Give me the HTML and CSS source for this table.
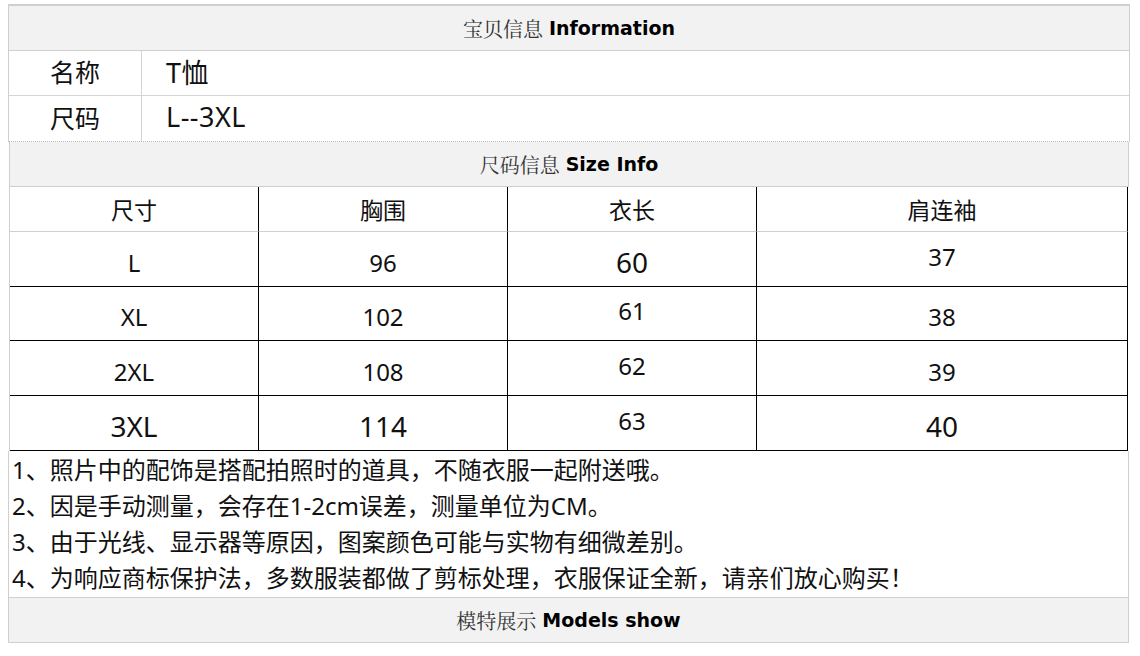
FILE: index.html
```html
<!DOCTYPE html>
<html lang="zh-CN">
<head>
<meta charset="utf-8">
<title>宝贝信息</title>
<link rel="stylesheet" href="styles.css">
</head>
<body>
<div class="page">
  <div class="info-box">
    <div class="sec-head first">宝贝信息 <b>Information</b></div>
    <div class="info-row"><div class="k">名称</div><div class="v">T恤</div></div>
    <div class="info-row last"><div class="k">尺码</div><div class="v">L--3XL</div></div>
  </div>
  <div class="sec-head size-head">尺码信息 <b>Size Info</b></div>
  <div class="size-table">
    <div class="c h">尺寸</div><div class="c h">胸围</div><div class="c h">衣长</div><div class="c h end">肩连袖</div>
    <div class="c">L</div><div class="c">96</div><div class="c big">60</div><div class="c end up">37</div>
    <div class="c">XL</div><div class="c">102</div><div class="c up">61</div><div class="c end">38</div>
    <div class="c">2XL</div><div class="c">108</div><div class="c up">62</div><div class="c end">39</div>
    <div class="c big">3XL</div><div class="c big">114</div><div class="c up">63</div><div class="c end big">40</div>
  </div>
  <div class="notes">
    <p>1、照片中的配饰是搭配拍照时的道具，不随衣服一起附送哦。</p>
    <p>2、因是手动测量，会存在1-2cm误差，测量单位为CM。</p>
    <p>3、由于光线、显示器等原因，图案颜色可能与实物有细微差别。</p>
    <p>4、为响应商标保护法，多数服装都做了剪标处理，衣服保证全新，请亲们放心购买！</p>
  </div>
  <div class="sec-head models-head">模特展示 <b>Models show</b></div>
</div>
</body>
</html>
```

FILE: styles.css
```css
html, body {
  margin: 0;
  padding: 0;
  background: #ffffff;
}

body {
  font-family: "Noto Sans", "Noto Sans CJK SC", sans-serif;
  color: #111;
}

.page {
  margin-left: 8px;
  padding-top: 4px;
  width: 1122px;
}

.info-box {
  border-left: 1px solid #cfcfcf;
  border-right: 1px solid #cfcfcf;
  border-bottom: 1px dotted #b8b8b8;
}

.sec-head {
  height: 44px;
  background: #f2f2f2;
  display: flex;
  align-items: center;
  justify-content: center;
  font-family: "Noto Serif CJK SC", "Noto Sans CJK SC", serif;
  font-size: 20px;
  color: #333;
}

.sec-head b {
  font-family: "DejaVu Sans", sans-serif;
  font-size: 19px;
  font-weight: bold;
  color: #000;
  margin-left: 6px;
}

.sec-head.first {
  border-top: 2px solid #cfcfcf;
  border-bottom: 1px solid #cfcfcf;
}

.info-row {
  display: flex;
  height: 44px;
  border-bottom: 1px solid #d4d4d4;
  font-size: 25px;
  color: #111;
}

.info-row.last {
  border-bottom: none;
  height: 45px;
}

.info-row .k {
  width: 133px;
  border-right: 1px solid #d4d4d4;
  display: flex;
  align-items: center;
  justify-content: center;
  padding-bottom: 4px;
  box-sizing: border-box;
}

.info-row .v {
  flex: 1;
  display: flex;
  align-items: center;
  padding-left: 24px;
  padding-bottom: 4px;
  font-size: 27px;
  letter-spacing: 0.5px;
}

.size-head {
  margin-left: 1px;
  width: 1118px;
  border-left: 1px solid #cfcfcf;
  border-right: 1px solid #cfcfcf;
  border-bottom: 1px solid #cfcfcf;
}

.size-table {
  margin-left: 1px;
  width: 1119px;
  display: grid;
  grid-template-columns: 249px 249px 249px 1fr;
  grid-template-rows: 45px 55px 54px 55px 55px;
  border-left: 1px solid #cfcfcf;
  box-sizing: border-box;
}

.c {
  display: flex;
  align-items: center;
  justify-content: center;
  border-right: 1px solid #000;
  border-bottom: 1px solid #000;
  font-size: 24px;
  color: #111;
  padding-top: 6px;
  box-sizing: border-box;
}

.c.h {
  border-bottom: 1px solid #d0d0d0;
  font-size: 23px;
  padding-top: 0;
}

.c.big {
  font-size: 28px;
}

.c.up {
  padding-top: 0;
  padding-bottom: 6px;
}

.notes {
  border-left: 1px solid #cfcfcf;
  border-right: 1px solid #cfcfcf;
  width: 1121px;
  box-sizing: border-box;
  padding: 1px 0 0 3px;
  height: 146px;
}

.notes p {
  margin: 0;
  font-size: 24px;
  line-height: 36px;
  color: #111;
  white-space: nowrap;
}

.models-head {
  border: 1px solid #cfcfcf;
  width: 1121px;
  box-sizing: border-box;
  height: 46px;
}
```
